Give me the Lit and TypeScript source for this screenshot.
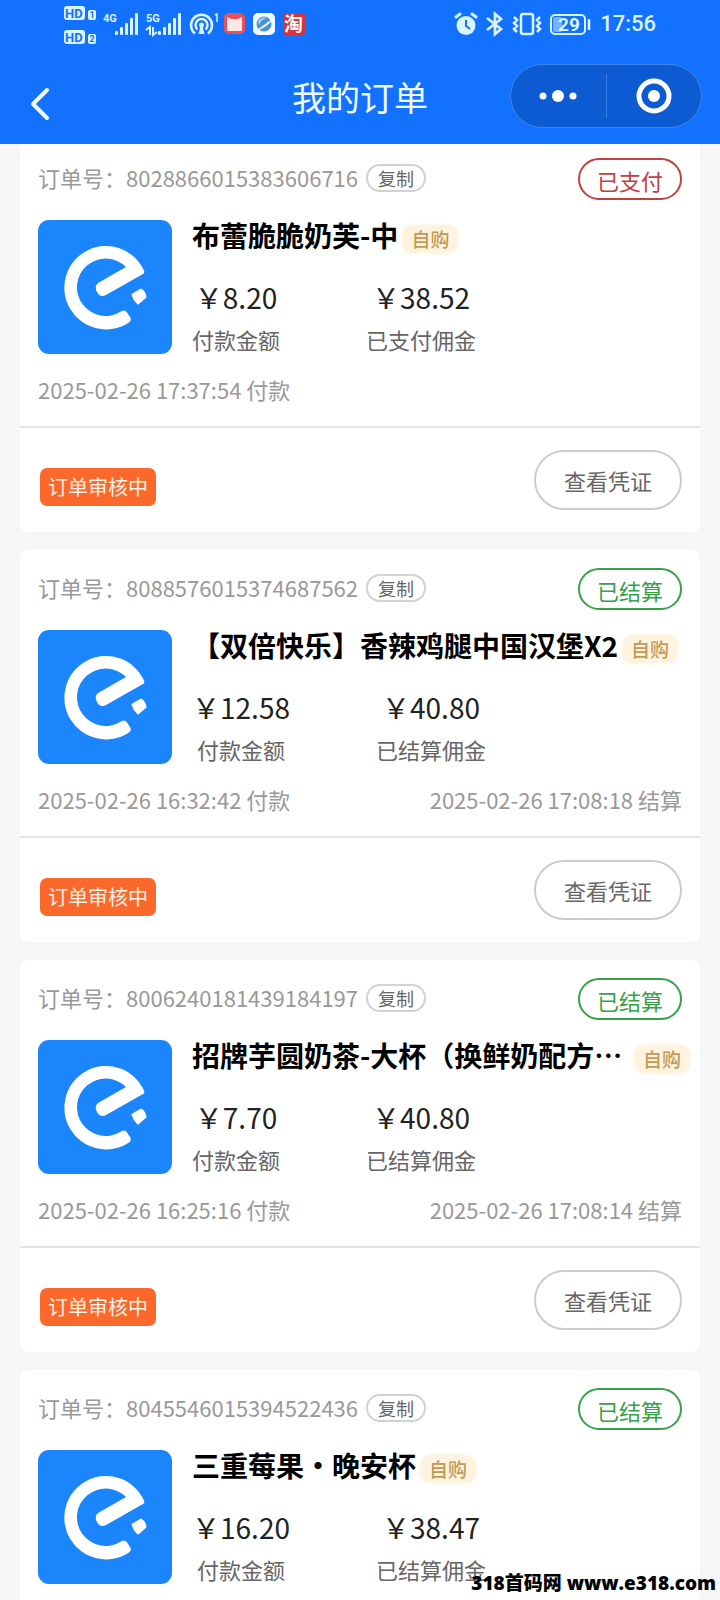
import { LitElement, html, css, svg } from "lit";
import { customElement, property } from "lit/decorators.js";
import { classMap } from "lit/directives/class-map.js";

interface Order {
  id: string;
  status: "paid" | "settled";
  name: string;
  clipped?: boolean;
  price: string;
  commission: string;
  paidAt: string;
  settledAt?: string;
}

const ORDERS: Order[] = [
  { id: "8028866015383606716", status: "paid", name: "布蕾脆脆奶芙-中", price: "8.20", commission: "38.52", paidAt: "2025-02-26 17:37:54" },
  { id: "8088576015374687562", status: "settled", name: "【双倍快乐】香辣鸡腿中国汉堡X2", price: "12.58", commission: "40.80", paidAt: "2025-02-26 16:32:42", settledAt: "2025-02-26 17:08:18" },
  { id: "8006240181439184197", status: "settled", name: "招牌芋圆奶茶-大杯（换鲜奶配方…", clipped: true, price: "7.70", commission: "40.80", paidAt: "2025-02-26 16:25:16", settledAt: "2025-02-26 17:08:14" },
  { id: "8045546015394522436", status: "settled", name: "三重莓果・晚安杯", price: "16.20", commission: "38.47", paidAt: "" },
];

const STATUS_TEXT = { paid: "已支付", settled: "已结算" };

@customElement("status-bar")
export class StatusBar extends LitElement {
  static styles = css`
    :host {
      display: flex;
      justify-content: space-between;
      align-items: center;
      height: 48px;
      padding: 0 64px;
      color: #d8f4ff;
      font-family: Roboto, "Noto Sans CJK SC", sans-serif;
    }
    .group { display: flex; align-items: center; }
    .left { gap: 8px; }
    .right { gap: 7px; }
    svg { display: block; flex: none; overflow: visible; }
    .clock { font-size: 22px; font-weight: 500; line-height: 32px; margin-left: 2px; }
    .tiny { font: 700 11px "Roboto", sans-serif; fill: currentColor; }
    .hd { font: 700 13px "Roboto", sans-serif; fill: #1371ff; }
    .num { font: 700 9px "Roboto", sans-serif; fill: #1371ff; }
    .tao { font: 700 19px "Noto Sans CJK SC", sans-serif; fill: #fff; }
    .level { font: 700 19px "Roboto", sans-serif; fill: currentColor; }
  `;

  private bars(x: number, bottom: number) {
    return [4, 8, 12, 17, 22].map(
      (h, i) => svg`<rect x=${x + i * 5} y=${bottom - h} width="3" height=${h} rx="1" fill="currentColor"/>`,
    );
  }

  render() {
    return html`
      <div class="group left">
        <svg width="32" height="40" viewBox="0 0 32 40">
          <rect x="0" y="2" width="21" height="14" rx="3" fill="currentColor"/>
          <rect x="0" y="26" width="21" height="14" rx="3" fill="currentColor"/>
          <text class="hd" x="1" y="14">HD</text>
          <text class="hd" x="1" y="38">HD</text>
          <rect x="24" y="6" width="8" height="10" rx="2" fill="currentColor"/>
          <rect x="24" y="30" width="8" height="10" rx="2" fill="currentColor"/>
          <text class="num" x="25.500" y="14">1</text>
          <text class="num" x="25.500" y="38">2</text>
        </svg>
        <svg width="34" height="24" viewBox="0 0 34 24">
          <text class="tiny" x="-1" y="10">4G</text>
          ${this.bars(11, 23)}
        </svg>
        <svg width="36" height="24" viewBox="0 0 36 24">
          <text class="tiny" x="0" y="10">5G</text>
          ${this.bars(12, 23)}
          <path d="M0 18l4-3v8M7 15v8l4-3" fill="none" stroke="currentColor" stroke-width="2"/>
        </svg>
        <svg width="26" height="24" viewBox="0 0 26 24" fill="none" stroke="currentColor" stroke-width="2.500">
          <path d="M5 21.500A10.500 10.500 0 1 1 18 21.500"/>
          <path d="M7.500 17.500A6 6 0 1 1 15.500 17.500"/>
          <circle cx="11.500" cy="13" r="2.500" fill="currentColor" stroke="none"/>
          <path d="M10.500 14l-2 8h6l-2-8z" fill="currentColor" stroke="none"/>
          <path d="M25 3l2-1v8" stroke-width="1.500"/>
        </svg>
        <svg width="80" height="24" viewBox="0 0 80 24">
          <rect x="0" y="1" width="21" height="21" rx="5" fill="#e8505c"/>
          <path d="M3 5l4 2h7l4-2v13q0 1-1 1H4q-1 0-1-1z" fill="#ffe9e8"/>
          <rect x="29" y="1" width="22" height="22" rx="5" fill="#f2fbff"/>
          <circle cx="40" cy="12" r="7.500" fill="#4a93d8"/>
          <path d="M31 19Q44 16 49 6Q42 12 31 19Z" fill="#f2fbff"/>
          <path d="M34 9q4-5 9-3q-6 1-8 7z" fill="#a9d6f5"/>
          <rect x="59" y="1" width="22" height="22" rx="3" fill="#d9303a"/>
          <text class="tao" x="60" y="19">淘</text>
        </svg>
      </div>
      <div class="group right">
        <svg width="24" height="24" viewBox="0 0 24 24">
          <circle cx="12" cy="13.500" r="9.500" fill="currentColor"/>
          <path d="M12 8v6l4 3" fill="none" stroke="#1371ff" stroke-width="2"/>
          <path d="M2 5l4-3M18 2l4 3" stroke="currentColor" stroke-width="3" stroke-linecap="round"/>
        </svg>
        <svg width="20" height="24" viewBox="0 0 20 24" fill="none" stroke="currentColor" stroke-width="2.700">
          <path d="M2 6l14 11-6 5V2l6 5L2 18"/>
        </svg>
        <svg width="30" height="24" viewBox="0 0 30 24" fill="none" stroke="currentColor" stroke-width="2.500">
          <rect x="9" y="2" width="12" height="20" rx="2"/>
          <path d="M2 5l3 3-3 3 3 3-3 3 3 3M28 5l-3 3 3 3-3 3 3 3-3 3"/>
        </svg>
        <svg width="42" height="24" viewBox="0 0 42 24">
          <rect x="2" y="3" width="34" height="19" rx="4" fill="none" stroke="currentColor" stroke-width="2"/>
          <rect x="4" y="5" width="9" height="15" rx="2" fill="currentColor" opacity="0.500"/>
          <path d="M40 7v11" stroke="currentColor" stroke-width="2.500"/>
          <text class="level" x="9" y="19">29</text>
        </svg>
        <span class="clock">17:56</span>
      </div>
    `;
  }
}

@customElement("order-card")
export class OrderCard extends LitElement {
  @property({ attribute: false }) order!: Order;

  static styles = css`
    :host {
      display: block;
      background: #fff;
      border-radius: 8px;
      font-size: 22px;
      line-height: 32px;
      color: #666;
    }
    button { font-family: inherit; background: none; cursor: pointer; box-sizing: border-box; }
    .head { display: flex; align-items: center; gap: 8px; padding: 18px 18px 0; color: #999; }
    .number { margin-bottom: 4px; }
    .copy {
      height: 28px;
      margin-bottom: 2px;
      padding: 0 10px;
      border: 2px solid #d2d2d2;
      border-radius: 14px;
      font-size: 18px;
      line-height: 24px;
      color: #666;
    }
    .status {
      margin-left: auto;
      box-sizing: border-box;
      height: 42px;
      padding: 3px 17px 0;
      border: 2px solid currentColor;
      border-radius: 21px;
      line-height: 34px;
    }
    .paid { color: #c2403f; }
    .settled { color: #37a148; }
    .body { display: flex; gap: 20px; padding: 20px 10px 0 18px; }
    .logo { display: block; flex: none; width: 134px; height: 134px; }
    .info { flex: 1; min-width: 0; margin-top: -6px; }
    .name-row { display: flex; align-items: center; gap: 4px; }
    .name {
      margin: 0;
      min-width: 0;
      overflow: hidden;
      white-space: nowrap;
      font-size: 28px;
      line-height: 42px;
      font-weight: 700;
      color: #000;
    }
    .clipped { flex: 1; }
    .tag {
      flex: none;
      margin-top: 8px;
      padding: 0 9px;
      border-radius: 10px;
      background: #fef3de;
      box-shadow: 0 0 4px #fef3de;
      font-size: 19px;
      line-height: 28px;
      font-weight: 500;
      color: #c29a55;
    }
    .amounts { display: flex; gap: 86px; margin: 21px 0 0; }
    .amount { display: flex; flex-direction: column-reverse; align-items: center; gap: 6px; }
    .amount dd { margin: 0; font-size: 28px; line-height: 40px; color: #222; }
    .times { display: flex; justify-content: space-between; min-height: 32px; padding: 18px 18px 21px; color: #999; }
    .foot {
      display: flex;
      justify-content: space-between;
      align-items: center;
      padding: 22px 18px 22px 20px;
      border-top: 2px solid #e4e4e4;
    }
    .review {
      margin-top: 14px;
      padding: 0 8px;
      border-radius: 7px;
      background: #fb682c;
      color: #fff3e6;
      font-size: 20px;
      line-height: 38px;
    }
    .voucher {
      height: 60px;
      padding: 0 28px;
      border: 2px solid #ccc;
      border-radius: 30px;
      font-size: 22px;
      line-height: 32px;
      color: #666;
    }
  `;

  render() {
    const o = this.order;
    return html`
      <div class="head">
        <span class="number">订单号：${o.id}</span>
        <button class="copy" type="button">复制</button>
        <span class="status ${o.status}">${STATUS_TEXT[o.status]}</span>
      </div>
      <div class="body">
        <svg class="logo" viewBox="0 0 134 134" aria-hidden="true">
          <rect width="134" height="134" rx="11" fill="#1b86fb"/>
          <path fill="#fff" d="M106 50.500A41.700 41.700 0 1 0 91 102.500Q94 100 92 97L89 92.500Q87 89 83 91.500A28.700 28.700 0 1 1 88 47L60 63Q56 66 59 72Q62 78 68 75L105 54Q107 53 106 50.500Z"/>
          <path fill="#fff" stroke="#fff" stroke-width="2" stroke-linejoin="round" d="M94.500 74.500L103 69.500Q107 72 107.500 77L100 83.500Q96 80 94.500 74.500Z"/>
        </svg>
        <div class="info">
          <div class="name-row">
            <h2 class=${classMap({ name: true, clipped: !!o.clipped })}>${o.name}</h2>
            <span class="tag">自购</span>
          </div>
          <dl class="amounts">
            <div class="amount"><dt>付款金额</dt><dd>￥${o.price}</dd></div>
            <div class="amount"><dt>${STATUS_TEXT[o.status]}佣金</dt><dd>￥${o.commission}</dd></div>
          </dl>
        </div>
      </div>
      <div class="times">
        ${o.paidAt ? html`<span>${o.paidAt} 付款</span>` : null}
        ${o.settledAt ? html`<span>${o.settledAt} 结算</span>` : null}
      </div>
      <div class="foot">
        <span class="review">订单审核中</span>
        <button class="voucher" type="button">查看凭证</button>
      </div>
    `;
  }
}

@customElement("app-root")
export class AppRoot extends LitElement {
  static styles = css`
    :host {
      display: flex;
      flex-direction: column;
      position: relative;
      height: 100vh;
      overflow: hidden;
      background: #f6f6f6;
      font-family: "Noto Sans CJK SC", sans-serif;
    }
    .header { flex: none; position: relative; z-index: 1; background: #1371ff; }
    .nav {
      display: grid;
      grid-template-columns: 1fr auto 1fr;
      align-items: center;
      height: 96px;
      padding: 0 18px;
      box-sizing: border-box;
    }
    button { padding: 0; border: 0; background: none; cursor: pointer; }
    .back { justify-self: start; margin: 16px 0 0 6px; }
    .nav svg { display: block; }
    .title { margin: 2px 0 0; font-size: 34px; line-height: 50px; font-weight: 400; color: #eefbff; }
    .capsule {
      justify-self: end;
      display: flex;
      align-items: center;
      box-sizing: border-box;
      width: 192px;
      height: 64px;
      border: 1px solid #3f86ea;
      border-radius: 32px;
      background: #0c5bd3;
    }
    .capsule button { flex: 1; display: flex; justify-content: center; align-items: center; height: 44px; }
    .capsule button + button { border-left: 1px solid #3a7fe2; }
    .list {
      flex: 1;
      min-height: 0;
      display: flex;
      flex-direction: column;
      gap: 18px;
      margin-top: -4px;
      padding: 0 20px;
      overflow-y: auto;
      scrollbar-width: none;
    }
    .list order-card { flex: none; }
    .mark {
      position: absolute;
      right: 4px;
      bottom: 3px;
      font: 800 19px/28px "Open Sans", "Noto Sans CJK SC", sans-serif;
      color: #000;
    }
  `;

  render() {
    return html`
      <header class="header">
        <status-bar></status-bar>
        <div class="nav">
          <button class="back" type="button" aria-label="返回">
            <svg width="32" height="40" viewBox="0 0 32 40" fill="none" stroke="#eefbff" stroke-width="4" stroke-linecap="round" stroke-linejoin="round">
              <path d="M23 6L9 20L23 34"/>
            </svg>
          </button>
          <h1 class="title">我的订单</h1>
          <div class="capsule">
            <button type="button" aria-label="更多">
              <svg width="40" height="40" viewBox="0 0 40 40" fill="#fff">
                <circle cx="5" cy="20" r="3.500"/><circle cx="20" cy="20" r="6"/><circle cx="35" cy="20" r="3.500"/>
              </svg>
            </button>
            <button type="button" aria-label="关闭">
              <svg width="40" height="40" viewBox="0 0 40 40">
                <circle cx="20" cy="20" r="15" fill="none" stroke="#fff" stroke-width="5"/>
                <circle cx="20" cy="20" r="6" fill="#fff"/>
              </svg>
            </button>
          </div>
        </div>
      </header>
      <main class="list">${ORDERS.map((o) => html`<order-card .order=${o}></order-card>`)}</main>
      <div class="mark">318首码网 www.e318.com</div>
    `;
  }
}
